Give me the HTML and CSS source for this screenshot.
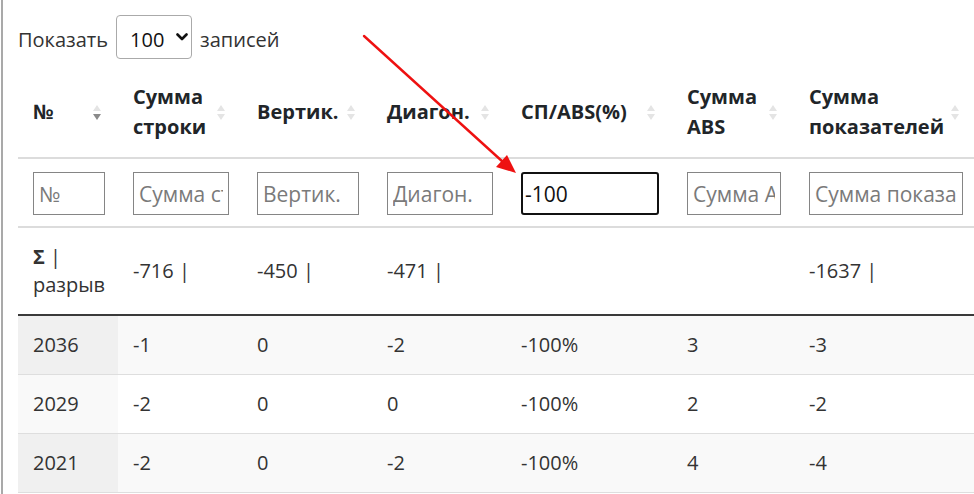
FILE: index.html
```html
<!DOCTYPE html>
<html lang="ru">
<head>
<meta charset="utf-8">
<title>Таблица</title>
<link rel="stylesheet" href="styles.css">
</head>
<body>
<div class="page">
  <div class="length">
    <span>Показать</span>
    <span class="select"><span>100</span>
      <svg class="chev" width="12" height="8" viewBox="0 0 12 8"><path d="M1.5 1.5 L6 6 L10.5 1.5" fill="none" stroke="#111" stroke-width="2.6" stroke-linecap="round" stroke-linejoin="round"/></svg>
    </span>
    <span>записей</span>
  </div>
  <table class="grid">
    <colgroup>
      <col class="c1"><col class="c2"><col class="c3"><col class="c4"><col class="c5"><col class="c6"><col class="c7">
    </colgroup>
    <thead>
      <tr class="head">
        <th><div class="hc"><span>№</span><span class="sort desc"><i class="up"></i><i class="dn"></i></span></div></th>
        <th><div class="hc"><span>Сумма строки</span><span class="sort"><i class="up"></i><i class="dn"></i></span></div></th>
        <th><div class="hc"><span>Вертик.</span><span class="sort"><i class="up"></i><i class="dn"></i></span></div></th>
        <th><div class="hc"><span>Диагон.</span><span class="sort"><i class="up"></i><i class="dn"></i></span></div></th>
        <th><div class="hc"><span>СП/ABS(%)</span><span class="sort"><i class="up"></i><i class="dn"></i></span></div></th>
        <th><div class="hc"><span>Сумма ABS</span><span class="sort"><i class="up"></i><i class="dn"></i></span></div></th>
        <th><div class="hc"><span>Сумма показателей</span><span class="sort"><i class="up"></i><i class="dn"></i></span></div></th>
      </tr>
      <tr class="filters">
        <td><input class="fi" placeholder="№"></td>
        <td><input class="fi" placeholder="Сумма строки"></td>
        <td><input class="fi" placeholder="Вертик."></td>
        <td><input class="fi" placeholder="Диагон."></td>
        <td><input class="fi focus" value="-100"></td>
        <td><input class="fi" placeholder="Сумма ABS"></td>
        <td><input class="fi" placeholder="Сумма показателей"></td>
      </tr>
      <tr class="sum">
        <td><b>Σ</b> |<br>разрыв</td>
        <td>-716 |</td>
        <td>-450 |</td>
        <td>-471 |</td>
        <td></td>
        <td></td>
        <td>-1637 |</td>
      </tr>
    </thead>
    <tbody>
      <tr class="odd"><td class="s">2036</td><td>-1</td><td>0</td><td>-2</td><td>-100%</td><td>3</td><td>-3</td></tr>
      <tr class="even"><td class="s">2029</td><td>-2</td><td>0</td><td>0</td><td>-100%</td><td>2</td><td>-2</td></tr>
      <tr class="odd"><td class="s">2021</td><td>-2</td><td>0</td><td>-2</td><td>-100%</td><td>4</td><td>-4</td></tr>
    </tbody>
  </table>
  <svg class="arrow" width="974" height="494" viewBox="0 0 974 494">
    <line x1="364" y1="36" x2="503" y2="162" stroke="#ee1111" stroke-width="2.4" stroke-linecap="round"/>
    <polygon points="516,173 496,167 507,155" fill="#ee1111"/>
  </svg>
</div>
</body>
</html>
```

FILE: styles.css
```css
html, body {
  margin: 0;
  padding: 0;
  background: #ffffff;
}
body {
  font-family: "Open Sans", "Noto Sans", "DejaVu Sans", sans-serif;
  font-size: 20px;
  color: #212529;
  overflow: hidden;
  width: 974px;
  height: 494px;
}
.page {
  position: relative;
  height: 494px;
  margin-left: 1px;
  border-left: 2px solid #a9a9a9;
  padding-left: 15px;
  overflow: hidden;
}
.length {
  display: flex;
  align-items: center;
  gap: 8px;
  padding-top: 15px;
  height: 44px;
  margin-bottom: 8px;
  font-size: 20px;
  color: #333;
}
.length span:first-child { margin-top: 4px; }
.length > span:last-child { margin-top: 4px; }
.select {
  display: inline-flex;
  align-items: center;
  gap: 12px;
  box-sizing: border-box;
  height: 44px;
  width: 76px;
  padding: 0 6px 0 13px;
  border: 1px solid #aaaaaa;
  border-radius: 4px;
  font-size: 20px;
  color: #111;
}
.chev {
  flex: none;
  width: 12px;
  height: 8px;
}
.grid {
  border-collapse: collapse;
  table-layout: fixed;
  width: 958px;
}
.c1 { width: 100px; }
.c2 { width: 124px; }
.c3 { width: 130px; }
.c4 { width: 134px; }
.c5 { width: 166px; }
.c6 { width: 122px; }
.c7 { width: 182px; }
.grid th, .grid td {
  padding: 15px 15px;
  line-height: 28px;
  text-align: left;
  vertical-align: middle;
}
.head th {
  font-weight: 700;
  line-height: 30px;
  padding-right: 17px;
  border-bottom: 2px solid #dcdcdc;
}
.hc {
  display: flex;
  align-items: center;
  justify-content: space-between;
  gap: 4px;
}
.sort {
  display: flex;
  flex-direction: column;
  gap: 3px;
  flex: none;
}
.sort i {
  display: block;
  width: 0;
  height: 0;
  border-left: 4px solid transparent;
  border-right: 4px solid transparent;
}
.sort .up { border-bottom: 6px solid #e4e4e4; }
.sort .dn { border-top: 6px solid #e4e4e4; }
.sort.desc .dn { border-top-color: #8a8a8a; }
.filters td {
  padding: 13px 13px 11px 15px;
  border-bottom: 2px solid #dcdcdc;
}
.fi {
  display: block;
  box-sizing: border-box;
  width: 100%;
  height: 43px;
  margin: 0;
  padding: 0 5px;
  border: 1px solid #858585;
  border-radius: 0;
  font-family: "Open Sans", "Noto Sans", sans-serif;
  font-size: 21px;
  color: #111;
  background: #fff;
  outline: none;
}
.fi::placeholder { color: #7a7a7a; }
.fi.focus {
  border: 2px solid #111;
  border-radius: 3px;
  padding: 0 2px;
}
.sum td {
  border-bottom: 2px solid #3a3a3a;
  color: #333;
}
.sum b { font-weight: 700; }
tbody td {
  border-top: 1px solid #dedede;
  color: #333;
}
tbody tr.odd td { background: #f9f9f9; }
tbody tr.odd td.s { background: #f0f0f0; }
tbody tr.even td { background: #ffffff; }
tbody tr.even td.s { background: #f9f9f9; }
tbody tr:last-child td { border-bottom: 1px solid #dedede; }
.arrow {
  position: absolute;
  left: -3px;
  top: 0;
  pointer-events: none;
}
```
